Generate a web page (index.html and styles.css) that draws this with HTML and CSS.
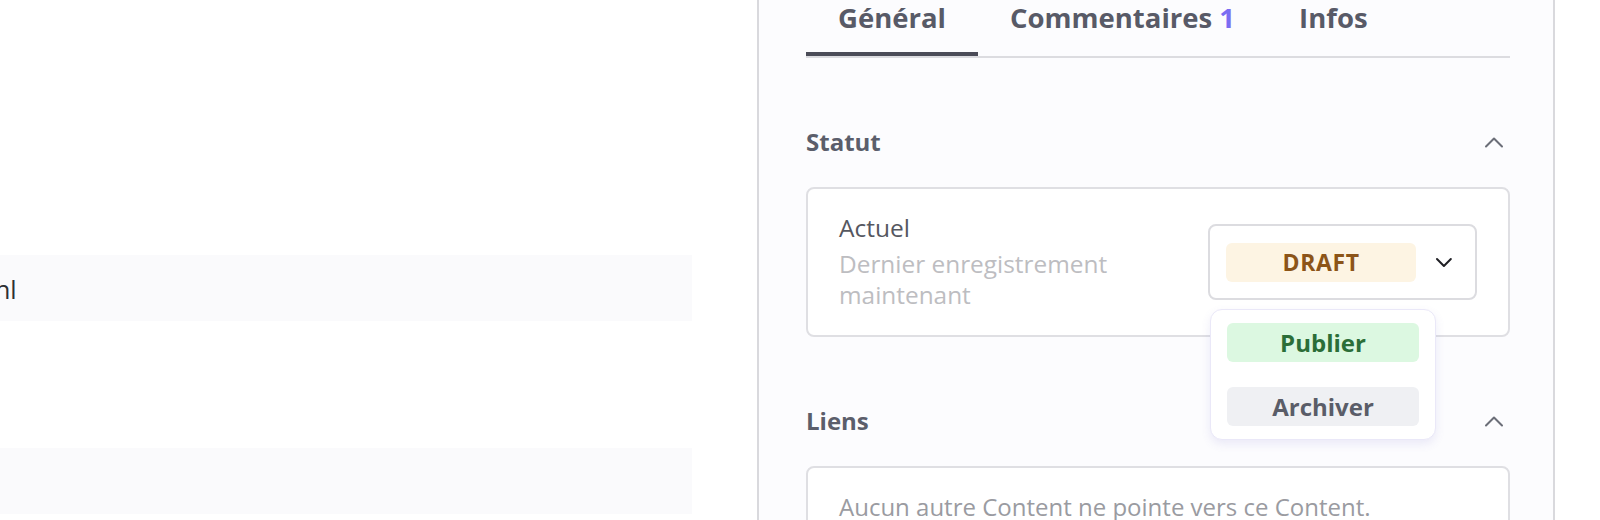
FILE: index.html
```html
<!DOCTYPE html>
<html lang="fr">
<head>
<meta charset="utf-8">
<title>Content</title>
<link rel="stylesheet" href="styles.css">
</head>
<body>
<div class="app">
  <main class="main">
    <div class="row"><span class="row-text">nl</span></div>
    <div class="row"></div>
  </main>
  <aside class="panel">
    <nav class="tabs">
      <div class="tab active">Général</div>
      <div class="tab">Commentaires <span class="count">1</span></div>
      <div class="tab">Infos</div>
    </nav>

    <section class="section">
      <header class="section-head">
        <h2 class="section-title">Statut</h2>
        <svg class="chev" width="20" height="12" viewBox="0 0 20 12"><path d="M2 10.5 L10 2.5 L18 10.5" fill="none" stroke="#6b6e78" stroke-width="2" stroke-linecap="round" stroke-linejoin="round"/></svg>
      </header>
      <div class="card status-card">
        <div class="status-info">
          <div class="status-label">Actuel</div>
          <div class="status-sub">Dernier enregistrement<br>maintenant</div>
        </div>
        <div class="select-wrap">
          <div class="select">
            <span class="badge draft">DRAFT</span>
            <svg class="chev-down" width="18" height="12" viewBox="0 0 18 12"><path d="M2 3 L9 10 L16 3" fill="none" stroke="#1f1f24" stroke-width="2" stroke-linecap="round" stroke-linejoin="round"/></svg>
          </div>
          <div class="menu">
            <span class="badge publish">Publier</span>
            <span class="badge archive">Archiver</span>
          </div>
        </div>
      </div>
    </section>

    <section class="section">
      <header class="section-head">
        <h2 class="section-title">Liens</h2>
        <svg class="chev" width="20" height="12" viewBox="0 0 20 12"><path d="M2 10.5 L10 2.5 L18 10.5" fill="none" stroke="#6b6e78" stroke-width="2" stroke-linecap="round" stroke-linejoin="round"/></svg>
      </header>
      <div class="card links-card">
        <p class="empty">Aucun autre Content ne pointe vers ce Content.</p>
      </div>
    </section>
  </aside>
</div>
</body>
</html>
```

FILE: styles.css
```css
* { box-sizing: border-box; }

html, body {
  margin: 0;
  padding: 0;
  background: #ffffff;
  height: 520px;
  overflow: hidden;
  font-family: "Open Sans", "Noto Sans", sans-serif;
}

.app {
  display: flex;
  height: 520px;
}

.main {
  width: 757px;
  flex: none;
  padding-top: 255px;
  padding-right: 65px;
  display: flex;
  flex-direction: column;
  gap: 127px;
  overflow: hidden;
}

.row {
  height: 66px;
  background: #fafafc;
  display: flex;
  align-items: center;
}

.row-text {
  font-size: 25px;
  color: #2e2f33;
  margin-left: -5px;
  line-height: 32px;
  padding-top: 1px;
}

.panel {
  width: 798px;
  flex: none;
  border-left: 2px solid #d9d9dd;
  border-right: 2px solid #d9d9dd;
  background: #fcfcfe;
  padding: 0 43px 0 47px;
  overflow: hidden;
}

.tabs {
  display: flex;
  border-bottom: 2px solid #dcdce0;
}

.tab {
  padding: 0 32px 16px;
  line-height: 36px;
  font-size: 27.5px;
  font-weight: 700;
  color: #585a67;
  border-bottom: 4px solid transparent;
  margin-bottom: -2px;
  height: 58px;
  white-space: nowrap;
}

.tab.active {
  border-bottom-color: #4b4c58;
  height: 56px;
  margin-bottom: 0;
}

.count { color: #7b6cf2; }

.section {
  padding-top: 68px;
}

.section-head {
  display: flex;
  align-items: center;
  justify-content: space-between;
  height: 32px;
  margin-bottom: 29px;
}

.section-title {
  margin: 0;
  font-size: 24px;
  font-weight: 700;
  color: #5b5e6b;
  line-height: 32px;
}

.chev { margin-right: 6px; }

.card {
  border: 2px solid #dfdfe3;
  border-radius: 8px;
  background: #ffffff;
}

.status-card {
  height: 150px;
  display: flex;
  align-items: center;
  justify-content: space-between;
  padding: 0 31px 0 31px;
}

.status-info { padding-bottom: 2px; }

.status-label {
  font-size: 24.5px;
  line-height: 32px;
  color: #55575f;
  margin-bottom: 4px;
}

.status-sub {
  font-size: 24.4px;
  line-height: 31px;
  color: #bdbdc1;
}

.select-wrap {
  position: relative;
}

.select {
  width: 269px;
  height: 76px;
  border: 2px solid #dcdce0;
  border-radius: 8px;
  background: #ffffff;
  display: flex;
  align-items: center;
  padding: 0 22px 0 16px;
  gap: 19px;
}

.badge {
  display: flex;
  align-items: center;
  justify-content: center;
  width: 192px;
  height: 39px;
  border-radius: 6px;
  font-size: 24px;
  font-weight: 700;
}

.draft {
  background: #fdf4e3;
  color: #8c5418;
  font-size: 23px;
  letter-spacing: 0.6px;
}

.menu {
  position: absolute;
  top: calc(100% + 9px);
  left: 2px;
  width: 226px;
  padding: 13px 16px;
  background: #ffffff;
  border: 1px solid #eae8f8;
  border-radius: 12px;
  box-shadow: 0 4px 10px rgba(110, 100, 200, 0.12);
  display: flex;
  flex-direction: column;
  gap: 25px;
  z-index: 2;
}

.publish {
  background: #dcf8e1;
  color: #2b6e38;
}

.archive {
  background: #eff0f3;
  color: #5a5d68;
}

.links-card {
  height: 120px;
  padding: 23px 31px;
}

.empty {
  margin: 0;
  font-size: 24px;
  line-height: 32px;
  color: #9a9ba1;
  white-space: nowrap;
}
```
